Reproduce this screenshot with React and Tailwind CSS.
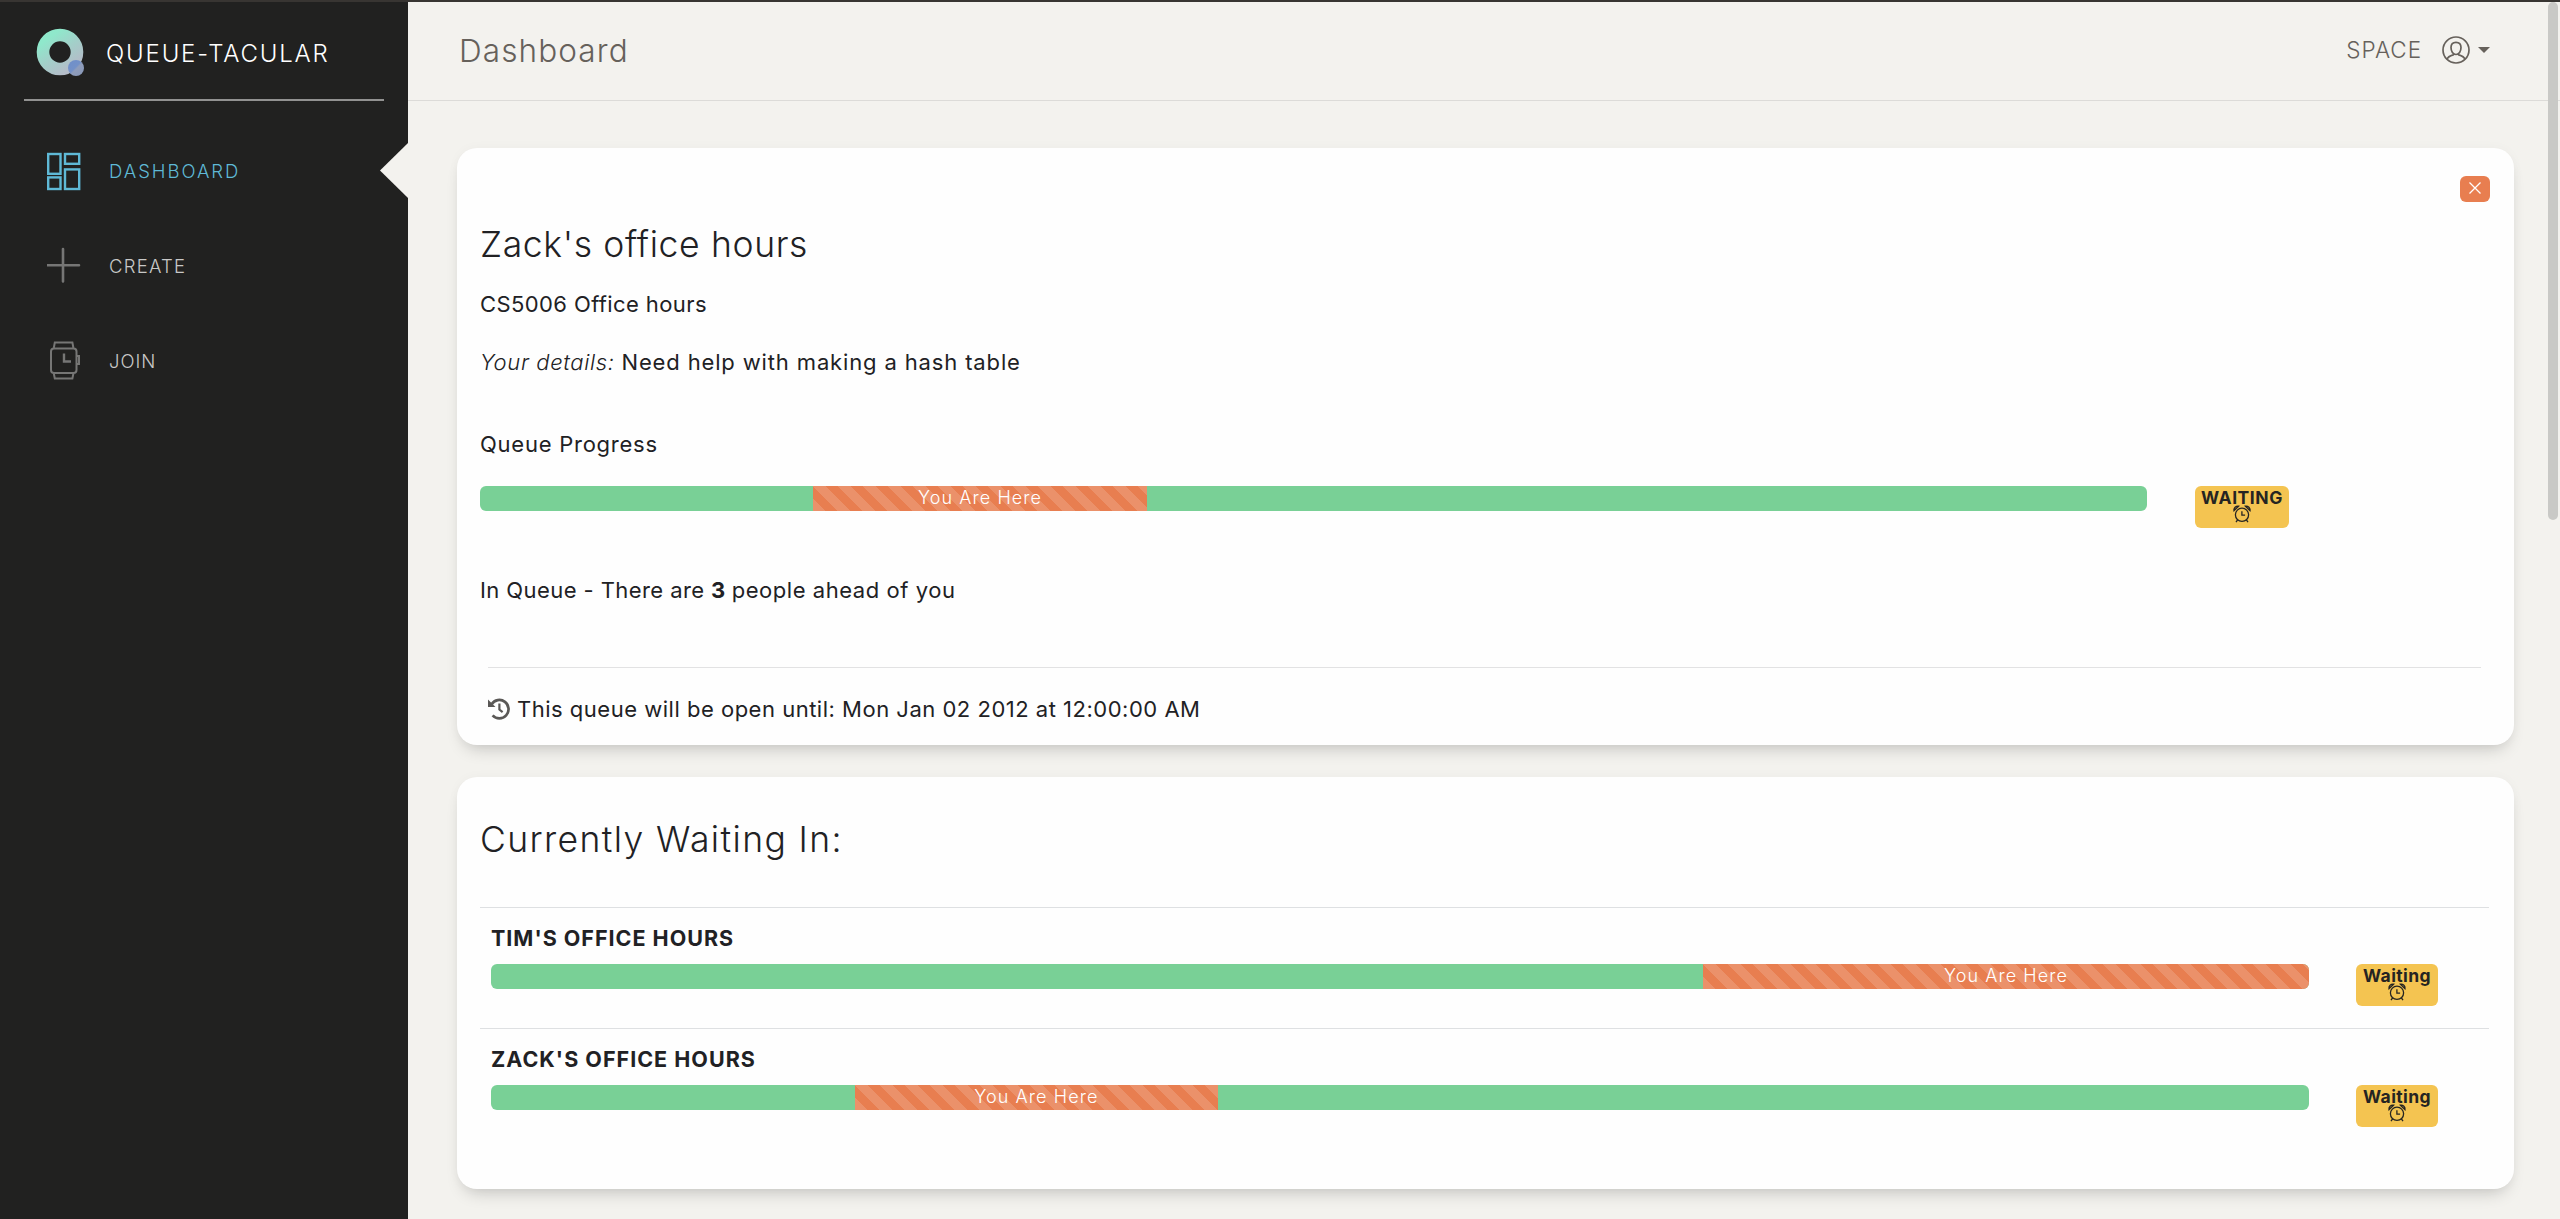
import React from "react";

function Logo() {
  return (
    <svg width="50" height="50" viewBox="0 0 50 50" className="mt-[4px] shrink-0">
      <defs>
        <linearGradient id="ring" x1="0.15" y1="0.1" x2="0.8" y2="1">
          <stop offset="0" stopColor="#8fe8cb" />
          <stop offset="0.5" stopColor="#a3cfc9" />
          <stop offset="1" stopColor="#b4bcc8" />
        </linearGradient>
        <linearGradient id="dot" x1="0" y1="0" x2="1" y2="1">
          <stop offset="0" stopColor="#6f8fc9" />
          <stop offset="0.46" stopColor="#7391c8" />
          <stop offset="0.54" stopColor="#8f9dbb" />
          <stop offset="1" stopColor="#8797b8" />
        </linearGradient>
      </defs>
      <circle cx="24" cy="24" r="17" fill="none" stroke="url(#ring)" strokeWidth="12.6" />
      <circle cx="40" cy="40" r="8" fill="url(#dot)" />
    </svg>
  );
}

function DashboardIcon() {
  return (
    <svg width="34" height="40" viewBox="0 0 34 40" fill="none" stroke="currentColor" strokeWidth="2.4">
      <rect x="1.2" y="3" width="12.3" height="19.8" />
      <rect x="1.2" y="26.4" width="12.3" height="11.6" />
      <rect x="18" y="3" width="14.2" height="9.8" />
      <rect x="18" y="18.4" width="14.2" height="19.6" />
    </svg>
  );
}

function PlusIcon() {
  return (
    <svg width="34" height="40" viewBox="0 0 34 40" fill="none" stroke="currentColor" strokeWidth="2.6" strokeLinecap="round">
      <path d="M16 3v32.4M.5 19.200h31.500" />
    </svg>
  );
}

function WatchIcon() {
  return (
    <svg width="34" height="40" viewBox="0 0 34 40" fill="none" stroke="currentColor" strokeWidth="2">
      <rect x="4" y="7.500" width="25.500" height="24.500" rx="3" />
      <path d="M6.800 7 7.800 1.500h17.600l1 5.500M6.800 32.500l1 5h17.600l1-5M29.500 15H32v8h-2.500" />
      <path d="M17 12.500v8h7" strokeWidth="2.400" />
    </svg>
  );
}

function UserIcon() {
  return (
    <svg width="28" height="28" viewBox="0 0 28 28" fill="none" stroke="currentColor" strokeWidth="1.700">
      <circle cx="14" cy="14" r="13" />
      <path d="M14 6.300c3 0 5 2 5 5.200 0 3.800-2 7-5 7s-5-3.200-5-7c0-3.200 2-5.200 5-5.200z" />
      <path d="M5 23.200c.8-2.300 3-3.300 6.200-4.300.5-.2.700-.6.700-1.200M23 23.200c-.8-2.300-3-3.300-6.200-4.300-.5-.2-.7-.6-.7-1.200" />
    </svg>
  );
}

function AlarmIcon() {
  return (
    <svg width="18" height="18" viewBox="0 0 18 18" fill="none" stroke="currentColor" strokeWidth="1.300">
      <circle cx="9" cy="9.800" r="6.600" />
      <path d="M8.900 6.200v4h3.200M4.600 14.800 3 17.200M13.400 14.800l1.600 2.400M1 5.600C.6 3 2.800.8 5.600 1.200zM17 5.600c.4-2.600-1.800-4.800-4.600-4.400z" />
    </svg>
  );
}

function HistoryIcon() {
  return (
    <svg width="22" height="22" viewBox="0 0 22 22" fill="none" stroke="currentColor" strokeWidth="2.700">
      <path d="M3.600 6.200A9.200 9.200 0 1 1 4.600 17.400" />
      <path d="M0 1.500V9h7.500z" fill="currentColor" stroke="none" />
      <path d="M11.400 5.600v6l3.200 2.600" strokeWidth="2.200" />
    </svg>
  );
}

const stripes =
  "bg-[#e87e50] bg-[linear-gradient(45deg,rgba(255,255,255,.15)_25%,transparent_25%,transparent_50%,rgba(255,255,255,.15)_50%,rgba(255,255,255,.15)_75%,transparent_75%,transparent)] bg-[length:25px_25px]";

function Progress({ before, here, className }) {
  return (
    <div className={`flex h-[25px] overflow-hidden rounded-[6px] bg-[#79d096] ${className}`}>
      <div style={{ width: `${before}%` }} />
      <div
        className={`flex items-start justify-center text-[18px] leading-[24px] font-light tracking-[0.060em] text-white ${stripes}`}
        style={{ width: `${here}%` }}
      >
        You Are Here
      </div>
    </div>
  );
}

function Badge({ label, className }) {
  return (
    <div className={`flex h-[42px] flex-col items-center rounded-[6px] bg-[#f4c451] text-[#252422] ${className}`}>
      <span className="h-[19px] text-[17.500px] leading-[24px] font-bold">{label}</span>
      <AlarmIcon />
    </div>
  );
}

function NavItem({ icon, label, active, tracking }) {
  return (
    <div className={`flex h-[40px] items-center ${active ? "text-[#5fb9d6]" : "text-[#767675]"}`}>
      {icon}
      <span className={`mt-[1px] ml-[28px] text-[18.500px] font-light ${tracking} ${active ? "" : "text-[#c8c8c7]"}`}>{label}</span>
    </div>
  );
}

function QueueRow({ name, before, here, tracking }) {
  return (
    <div className="h-[121px] border-t border-[#dee0e2] px-[11px] pt-[15px]">
      <div className={`h-[31px] text-[21.500px] leading-[31px] font-bold ${tracking}`}>{name}</div>
      <div className="mt-[10px] flex">
        <Progress before={before} here={here} className="w-[1818px]" />
        <Badge label="Waiting" className="ml-[47px] w-[82px] tracking-[0.024em]" />
      </div>
    </div>
  );
}

const card = "rounded-[20px] bg-[#fefefe] shadow-[0_10px_17px_-7px_rgba(0,0,0,0.2),0_0_12px_rgba(0,0,0,0.03)]";

export default function App() {
  return (
    <div className="flex h-[1219px] flex-col overflow-hidden bg-[#f3f2ee] font-[Inter,'Liberation_Sans',sans-serif] text-[#212124]">
      <div className="h-[2px] shrink-0 bg-[#383532]" />
      <div className="flex min-h-0 flex-1">
        <aside className="relative w-[408px] shrink-0 bg-[#212120]">
          <div className="mx-[24px] flex h-[99px] items-center border-b-2 border-[#929291] pl-[12px]">
            <Logo />
            <span className="mt-[6px] ml-[20px] text-[24px] font-light tracking-[0.076em] text-white">QUEUE-TACULAR</span>
          </div>
          <nav className="mt-[50px] flex flex-col gap-[55px] pl-[47px]">
            <NavItem icon={<DashboardIcon />} label="DASHBOARD" active tracking="tracking-[0.106em]" />
            <NavItem icon={<PlusIcon />} label="CREATE" tracking="tracking-[0.066em]" />
            <NavItem icon={<WatchIcon />} label="JOIN" tracking="tracking-[0.050em]" />
          </nav>
          <div className="absolute top-[141px] right-0 h-[55px] w-[28px] bg-[#f3f2ee] [clip-path:polygon(100%_0,0_50%,100%_100%)]" />
        </aside>
        <main className="relative min-w-0 flex-1">
          <header className="flex h-[99px] items-center justify-between border-b border-[#dcdbd8] pr-[70px] pb-[2px] pl-[51px] text-[#66615b]">
            <h1 className="mt-[2px] text-[31.500px] font-light tracking-[0.035em]">Dashboard</h1>
            <div className="flex items-center">
              <span className="text-[22.500px] font-light tracking-[0.042em]">SPACE</span>
              <span className="ml-[20px]"><UserIcon /></span>
              <svg width="12" height="6" viewBox="0 0 12 6" className="ml-[8px]"><path d="M0 0h12L6 6z" fill="currentColor" /></svg>
            </div>
          </header>
          <section className={`mt-[47px] ml-[49px] h-[597px] w-[2057px] px-[23px] pt-[28px] ${card}`}>
            <div className="flex justify-end pr-px">
              <button className="flex h-[26px] w-[30px] items-center justify-center rounded-[6px] bg-[#e87e50]">
                <svg width="12" height="12" viewBox="0 0 12 12" stroke="white" strokeWidth="1.300" className="mb-[2px]"><path d="M.5.5l11 11M11.500.5l-11 11" /></svg>
              </button>
            </div>
            <h2 className="mt-[20px] h-[45px] text-[35.500px] leading-[45px] font-light tracking-[0.018em]">Zack's office hours</h2>
            <p className="mt-[22px] h-[30px] text-[22px] leading-[30px] font-normal tracking-[0.018em]">CS5006 Office hours</p>
            <p className="mt-[28px] h-[30px] text-[22px] leading-[30px] font-normal tracking-[0.039em]"><span className="font-light tracking-[0.029em] italic">Your details: </span>Need help with making a hash table</p>
            <p className="mt-[52px] h-[30px] text-[22px] leading-[30px] font-normal tracking-[0.034em]">Queue Progress</p>
            <div className="mt-[27px] flex">
              <Progress before={20} here={20} className="w-[1667px]" />
              <Badge label="WAITING" className="ml-[48px] w-[94px] tracking-[0.034em]" />
            </div>
            <p className="mt-[47px] h-[31px] text-[22px] leading-[31px] font-normal tracking-[0.025em]"><span className="tracking-[0.019em]">In Queue - There are </span><b className="font-bold">3 </b>people ahead of you</p>
            <div className="mt-[61px] mr-[10px] ml-[8px] border-t border-[#e2e2e3]" />
            <div className="mx-[8px] mt-[26px] flex h-[30px] items-center text-[22px] font-normal tracking-[0.023em]">
              <span className="text-[#5a5856]"><HistoryIcon /></span>
              <span className="ml-[7px]">This queue will be open until: Mon Jan 02 2012 at 12:00:00 AM</span>
            </div>
          </section>
          <section className={`mt-[32px] ml-[49px] h-[412px] w-[2057px] pt-[40px] pr-[25px] pl-[23px] ${card}`}>
            <h2 className="mb-[45px] h-[45px] text-[35.500px] leading-[45px] font-light tracking-[0.039em]">Currently Waiting In:</h2>
            <QueueRow name="TIM'S OFFICE HOURS" before={66.667} here={33.333} tracking="tracking-[0.046em]" />
            <QueueRow name="ZACK'S OFFICE HOURS" before={20} here={20} tracking="tracking-[0.047em]" />
          </section>
          <div className="absolute top-0 right-[2px] h-[518px] w-[10px] rounded-full bg-[#c9c9c6]" />
        </main>
      </div>
    </div>
  );
}
